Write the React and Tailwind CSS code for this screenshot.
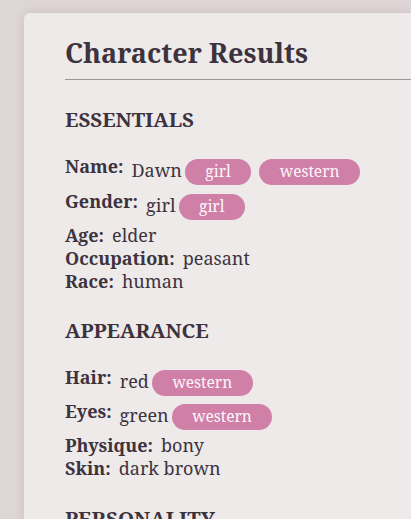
import React from "react";

const Pill = ({ children }) => (
  <span className="inline-flex items-center justify-center h-[26px] px-[20.5px] rounded-full bg-[#d07fa6] text-[#fdf6fa] text-[15.5px] leading-none">
    {children}
  </span>
);

const Row = ({ label, value, tags = [], className = "" }) => (
  <div className={"flex items-start " + className}>
    <span className="font-bold text-[18px] leading-[23px] mr-[8px]">{label}</span>
    {tags.length ? (
      <div className="flex flex-wrap items-baseline gap-x-[8px] gap-y-[4px] mt-[4px]">
        <span className="text-[18px] leading-[23px] mr-[-5px]">{value}</span>
        {tags.map((t, i) => (
          <Pill key={i}>{t}</Pill>
        ))}
      </div>
    ) : (
      <span className="text-[18px] leading-[23px]">{value}</span>
    )}
  </div>
);

export default function App() {
  return (
    <div
      className="min-h-[519px] bg-[#ded5d6] pt-[13px] pl-[24px] text-[#3d333e] overflow-hidden"
      style={{ fontFamily: '"Noto Serif", "DejaVu Serif", serif' }}
    >
      <div className="bg-[#eeeae9] rounded-tl-[6px] shadow-[0_0_8px_rgba(80,60,70,0.15)] pl-[41px] pt-[20px] h-[520px]">
        <h1 className="text-[27px] font-bold leading-[40px]">Character Results</h1>
        <div className="h-px bg-[#9a9597] mt-[6px]" />
        <h2 className="text-[20.5px] font-bold mt-[25px] leading-[28px]">ESSENTIALS</h2>
        <div className="mt-[22px] flex flex-col">
          <Row className="mb-[5px]" label="Name:" value="Dawn" tags={["girl", "western"]} />
          <Row className="mb-[4px]" label="Gender:" value="girl" tags={["girl"]} />
          <Row label="Age:" value="elder" />
          <Row label="Occupation:" value="peasant" />
          <Row label="Race:" value="human" />
        </div>
        <h2 className="text-[20.5px] font-bold mt-[23px] leading-[28px]">APPEARANCE</h2>
        <div className="mt-[22px] flex flex-col">
          <Row className="mb-[4px]" label="Hair:" value="red" tags={["western"]} />
          <Row className="mb-[4px]" label="Eyes:" value="green" tags={["western"]} />
          <Row label="Physique:" value="bony" />
          <Row label="Skin:" value="dark brown" />
        </div>
        <h2 className="text-[20.5px] font-bold mt-[24px] leading-[28px]">PERSONALITY</h2>
      </div>
    </div>
  );
}
